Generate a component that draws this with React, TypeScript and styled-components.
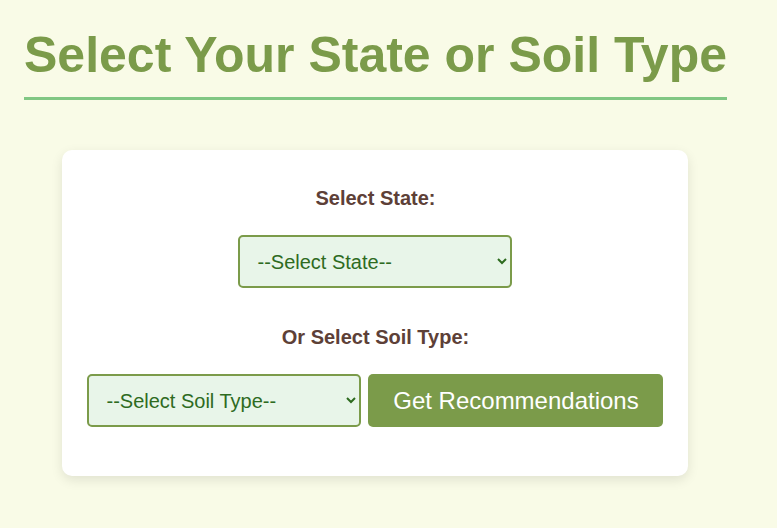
import React, { useState } from 'react';
import styled, { createGlobalStyle } from 'styled-components';

const GlobalStyle = createGlobalStyle`
  html, body {
    margin: 0;
    padding: 0;
    background: #f9fbe7;
  }
  body {
    font-family: 'Liberation Sans', Arial, sans-serif;
  }
`;

const Page = styled.div`
  min-height: 528px;
  box-sizing: border-box;
  padding: 24px;
`;

const Container = styled.div`
  width: fit-content;
`;

const Title = styled.h1`
  margin: 2px 0 0;
  padding-bottom: 13px;
  font-size: 50px;
  font-weight: 700;
  color: #7b9b4a;
  border-bottom: 3px solid #81c784;
  white-space: nowrap;
`;

const Card = styled.div`
  width: 626px;
  box-sizing: border-box;
  margin: 50px auto 0;
  padding: 37px 25px 49px;
  background: #ffffff;
  border-radius: 10px;
  box-shadow: 0 4px 12px rgba(0, 0, 0, 0.1);
  display: flex;
  flex-direction: column;
  align-items: center;
`;

const Label = styled.label<{ $gap?: number }>`
  display: block;
  margin-top: ${({ $gap }) => $gap ?? 0}px;
  font-size: 20px;
  font-weight: 700;
  color: #5d4037;
  text-align: center;
`;

const Select = styled.select<{ $gap?: number }>`
  width: 274px;
  height: 53px;
  margin-top: ${({ $gap }) => $gap ?? 0}px;
  padding: 0 12px 0 13px;
  font-family: 'Liberation Sans', Arial, sans-serif;
  font-size: 20px;
  color: #2e6b1f;
  background: #e8f5e9;
  border: 2px solid #7b9b4a;
  border-radius: 5px;
  box-sizing: border-box;
`;

const Row = styled.div`
  margin-top: 25px;
  display: flex;
  align-items: center;
  gap: 7px;
`;

const Button = styled.button`
  width: 295px;
  height: 53px;
  padding: 0;
  font-family: 'Liberation Sans', Arial, sans-serif;
  font-size: 24px;
  white-space: nowrap;
  color: #ffffff;
  background: #7b9b4a;
  border: none;
  border-radius: 5px;
  cursor: pointer;
`;

const states = ['--Select State--', 'Andhra Pradesh', 'Bihar', 'Gujarat', 'Karnataka', 'Punjab'];
const soils = ['--Select Soil Type--', 'Alluvial', 'Black', 'Red', 'Laterite', 'Sandy'];

const App = () => {
  const [state, setState] = useState(states[0]);
  const [soil, setSoil] = useState(soils[0]);

  return (
    <Page>
      <GlobalStyle />
      <Container>
        <Title>Select Your State or Soil Type</Title>
        <Card>
          <Label htmlFor="state">Select State:</Label>
          <Select id="state" $gap={25} value={state} onChange={e => setState(e.target.value)}>
            {states.map(s => (
              <option key={s}>{s}</option>
            ))}
          </Select>
          <Label htmlFor="soil" $gap={38}>
            Or Select Soil Type:
          </Label>
          <Row>
            <Select id="soil" value={soil} onChange={e => setSoil(e.target.value)}>
              {soils.map(s => (
                <option key={s}>{s}</option>
              ))}
            </Select>
            <Button>Get Recommendations</Button>
          </Row>
        </Card>
      </Container>
    </Page>
  );
};

export default App;
